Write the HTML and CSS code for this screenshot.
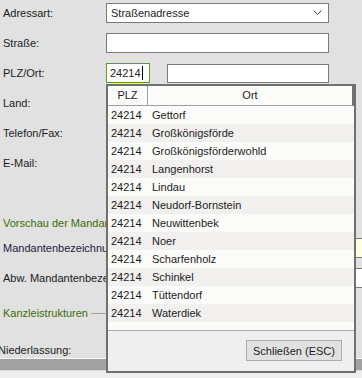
FILE: index.html
```html
<!DOCTYPE html>
<html lang="de">
<head>
<meta charset="utf-8">
<link rel="stylesheet" href="styles.css">
</head>
<body>
<div class="window">
  <div class="form">
    <div class="row"><span class="label">Adressart:</span>
      <div class="select"><span>Straßenadresse</span>
        <svg class="chev" width="9" height="6" viewBox="0 0 9 6"><path d="M0.5 0.5 L4.5 4.5 L8.5 0.5" fill="none" stroke="#444" stroke-width="1"/></svg>
      </div>
    </div>
    <div class="row"><span class="label">Straße:</span><div class="input wide"></div></div>
    <div class="row"><span class="label">PLZ/Ort:</span>
      <div class="plzgroup">
        <div class="input plz focus">24214<span class="caret"></span></div>
        <div class="input ort"></div>
      </div>
    </div>
    <div class="row"><span class="label">Land:</span><div class="input wide"></div></div>
    <div class="row"><span class="label">Telefon/Fax:</span><div class="input wide"></div></div>
    <div class="row"><span class="label">E-Mail:</span><div class="input wide"></div></div>
    <div class="section first"><span class="cut">Vorschau der Mandantenbezeichnung</span></div>
    <div class="row"><span class="label dark">Mandantenbezeichnung:</span><div class="input long required"></div></div>
    <div class="row"><span class="label">Abw. Mandantenbezeichnung:</span><div class="input long"></div></div>
    <div class="section second"><span>Kanzleistrukturen</span><span class="rule"></span></div>
    <div class="row last"><span class="label shifted">Niederlassung:</span></div>
  </div>
  <div class="statusline"></div>
  <div class="statusbar"></div>
  <div class="bottomedge"></div>

  <div class="popup">
    <div class="list">
      <div class="head"><span class="c1">PLZ</span><span class="c2">Ort</span></div>
      <div class="item"><span class="c1">24214</span><span class="c2">Gettorf</span></div>
      <div class="item"><span class="c1">24214</span><span class="c2">Großkönigsförde</span></div>
      <div class="item"><span class="c1">24214</span><span class="c2">Großkönigsförderwohld</span></div>
      <div class="item"><span class="c1">24214</span><span class="c2">Langenhorst</span></div>
      <div class="item"><span class="c1">24214</span><span class="c2">Lindau</span></div>
      <div class="item"><span class="c1">24214</span><span class="c2">Neudorf-Bornstein</span></div>
      <div class="item"><span class="c1">24214</span><span class="c2">Neuwittenbek</span></div>
      <div class="item"><span class="c1">24214</span><span class="c2">Noer</span></div>
      <div class="item"><span class="c1">24214</span><span class="c2">Scharfenholz</span></div>
      <div class="item"><span class="c1">24214</span><span class="c2">Schinkel</span></div>
      <div class="item"><span class="c1">24214</span><span class="c2">Tüttendorf</span></div>
      <div class="item"><span class="c1">24214</span><span class="c2">Waterdiek</span></div>
    </div>
    <div class="panel"><button class="btn">Schließen (ESC)</button></div>
  </div>
</div>
</body>
</html>
```
FILE: styles.css
```css
html, body {
  margin: 0;
  padding: 0;
}
body {
  width: 362px;
  height: 378px;
  overflow: hidden;
  background: #e1e1e1;
  font-family: "Liberation Sans", Arial, sans-serif;
  font-size: 11px;
  color: #1b1b1b;
}
.window {
  position: relative;
  width: 362px;
  height: 378px;
  display: flex;
  flex-direction: column;
}
.form {
  height: 360px;
  overflow: hidden;
  display: flex;
  flex-direction: column;
  margin-top: -2px;
}
.row {
  height: 30px;
  flex: none;
  display: flex;
  align-items: center;
}
.label {
  width: 103px;
  flex: none;
  padding-left: 3px;
  white-space: nowrap;
  overflow: hidden;
}
.label.dark { color: #22183a; }
.label.shifted { margin-left: -5px; width: 108px; }
.input, .select {
  box-sizing: border-box;
  height: 20px;
  background: #fff;
  border: 1px solid #7a7a7a;
  flex: none;
}
.wide { width: 223px; }
.long { width: 270px; }
.required { background: #ffffe1; }
.select {
  width: 223px;
  display: flex;
  align-items: center;
  justify-content: space-between;
  padding: 0 6px 0 4px;
  font-size: 11px;
}
.chev { display: block; }
.plzgroup {
  display: flex;
  gap: 17px;
}
.plz {
  width: 44px;
  display: flex;
  align-items: center;
  padding-left: 3px;
}
.focus { border-color: #5e9d1b; }
.caret {
  width: 1px;
  height: 14px;
  background: #000;
  margin-left: 1px;
}
.ort {
  width: 162px;
  height: 19px;
  margin-top: 1px;
}
.section {
  height: 20px;
  flex: none;
  display: flex;
  align-items: center;
  padding-left: 3px;
  color: #3b6c07;
  white-space: nowrap;
}
.section .cut {
  width: 103px;
  overflow: hidden;
}
.section.first { margin-top: 35px; }
.section.second { margin-top: 10px; }
.rule {
  width: 30px;
  height: 1px;
  background: #a0a0a0;
  margin-left: 3px;
  flex: none;
}
.row.last { margin-top: 12px; }
.statusline { height: 1px; background: #fbfbfb; flex: none; }
.statusbar { height: 11px; background: #a2a2a2; flex: none; }
.bottomedge { flex: 1; background: #efefef; border-top: 1px solid #d8d8d8; }

/* popup overlay */
.popup {
  position: absolute;
  left: 106px;
  top: 84px;
  width: 250px;
  height: 289px;
  box-sizing: border-box;
  border: 2px solid #707070;
  background: #efefef;
  display: flex;
  flex-direction: column;
}
.list {
  height: 245px;
  flex: none;
  background: #fbfbf9;
  border-bottom: 1px solid #a8a8a8;
  box-sizing: border-box;
}
.head {
  height: 20px;
  display: flex;
  background: #fbfbfa;
  border-bottom: 1px solid #a0a0a0;
  border-right: 2px solid #707070;
  box-sizing: border-box;
  color: #1b1b1b;
}
.head .c1 {
  width: 39px;
  border-right: 1px solid #a0a0a0;
  text-align: center;
  line-height: 19px;
}
.head .c2 {
  flex: 1;
  text-align: center;
  line-height: 19px;
}
.item {
  height: 18px;
  display: flex;
  align-items: center;
}
.item:nth-child(odd) { background: #f1f0ee; }
.item:nth-child(even) { background: #fbfbf9; }
.item .c1 { width: 40px; padding-left: 3px; box-sizing: border-box; }
.item .c2 { padding-left: 4px; white-space: nowrap; }
.panel {
  flex: 1;
  display: flex;
  justify-content: flex-end;
  align-items: flex-start;
  padding: 9px 12px 0 0;
}
.btn {
  width: 96px;
  height: 21px;
  background: #e1e1e1;
  border: 1px solid #adadad;
  font-family: "Liberation Sans", Arial, sans-serif;
  font-size: 11px;
  color: #1b1b1b;
  padding: 0;
}
```
